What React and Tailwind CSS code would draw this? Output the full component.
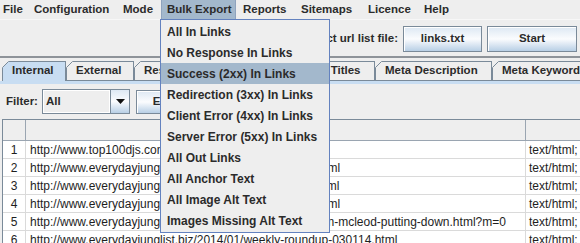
import React from 'react';

const menus = [
  ['File', 'w-[28px] pl-[3px]'],
  ['Configuration', 'w-[89px] pl-[6px]'],
  ['Mode', 'w-[44px] pl-[6px]'],
  ['Bulk Export', 'w-[75px] pl-[6px]', true],
  ['Reports', 'w-[58px] pl-[7px]'],
  ['Sitemaps', 'w-[67px] pl-[7px]'],
  ['Licence', 'w-[56px] pl-[7px]'],
  ['Help', 'w-[48px] pl-[7px]']
];

const exportItems = [
  'All In Links',
  'No Response In Links',
  'Success (2xx) In Links',
  'Redirection (3xx) In Links',
  'Client Error (4xx) In Links',
  'Server Error (5xx) In Links',
  'All Out Links',
  'All Anchor Text',
  'All Image Alt Text',
  'Images Missing Alt Text'
];

const tabs = [
  ['Internal', 'w-[64px]', true],
  ['External', 'w-[68px]'],
  ['Response Codes', 'w-[116px]'],
  ['URI', 'w-[40px]'],
  ['Page Titles', 'w-[85px]'],
  ['Meta Description', 'w-[117px]'],
  ['Meta Keywords', 'w-[124px]']
];

const rows = [
  'http://www.top100djs.com/dj/dj-hype',
  'http://www.everydayjunglist.biz/2014/01/weekend-mix.html',
  'http://www.everydayjunglist.biz/2014/01/free-releases.html',
  'http://www.everydayjunglist.biz/2014/01/old-skool-mix.html',
  'http://www.everydayjunglist.biz/2014/01/q-and-a-with-tom-mcleod-putting-down.html?m=0',
  'http://www.everydayjunglist.biz/2014/01/weekly-roundup-030114.html'
];

const btn =
  'flex items-center justify-center border border-[#7a8a99] bg-linear-to-b from-[#dde8f3] via-[#fbfcfe] to-[#b8cfe5] shadow-[inset_1px_1px_0_#ffffff] font-bold text-[11.5px] text-[#2b2b2b]';

function TabCorner() {
  return (
    <svg className="absolute -left-px -top-px" width="7" height="7" viewBox="0 0 7 7">
      <polygon points="0,0 7,0 0,7" fill="#eeeeee" />
      <line x1="0.5" y1="6.5" x2="6.5" y2="0.5" stroke="#7a8a99" strokeWidth="1" />
    </svg>
  );
}

export default function App() {
  return (
    <div className="relative h-[243px] w-[580px] overflow-hidden bg-[#eeeeee] font-['Liberation_Sans',Arial,sans-serif] text-[#2b2b2b]">
      {/* menu bar */}
      <div className="flex h-[20px] border-b border-[#f7f7f7] text-[11.5px] font-bold">
        {menus.map(([label, cls, active]) => (
          <div
            key={label}
            className={`${cls} flex h-[19px] shrink-0 items-center whitespace-nowrap ${
              active ? 'bg-[#a3b8cc] shadow-[inset_1px_0_0_#8fa3bd,inset_-1px_0_0_#8fa3bd]' : ''
            }`}
          >
            {label}
          </div>
        ))}
      </div>

      {/* toolbar */}
      <div className="flex h-[36px] items-center justify-end pr-[3px] pt-px">
        <span className="mr-[5px] text-[11.5px] font-bold">Select url list file:</span>
        <div className={`${btn} mr-[5px] h-[26px] w-[79px]`}>links.txt</div>
        <div className={`${btn} h-[26px] w-[90px]`}>Start</div>
      </div>

      <div className="h-[2px] bg-[#8e9399]" />

      {/* tabs */}
      <div className="flex h-[23px] items-end pl-[2px] text-[11.5px] font-bold">
        {tabs.map(([label, cls, selected]) => (
          <div
            key={label}
            className={`${cls} relative flex shrink-0 items-center whitespace-nowrap border-x border-t border-[#7a8a99] pl-[9px] ${
              selected ? 'h-[20px] bg-[#c8ddf2] pb-px' : 'h-[20px] border-b bg-[#eeeeee]'
            }`}
          >
            <TabCorner />
            {label}
          </div>
        ))}
      </div>
      <div className="h-[3px] bg-[#c8ddf2]" />

      {/* filter row */}
      <div className="flex h-[35px] items-center pl-[6px]">
        <span className="w-[36px] text-[11.5px] font-bold">Filter:</span>
        <div className="flex h-[25px] w-[88px] border border-[#7a8a99]">
          <div className="flex flex-1 items-center bg-[#eeeeee] pl-[3px] text-[11.5px] font-bold shadow-[inset_0_0_0_1px_#ffffff]">
            All
          </div>
          <div className="flex w-[19px] items-center justify-center border-l border-[#7a8a99] bg-linear-to-b from-[#dde8f3] via-[#fbfcfe] to-[#b8cfe5]">
            <svg width="9" height="5" viewBox="0 0 9 5">
              <polygon points="0,0 9,0 4.5,5" fill="#111111" />
            </svg>
          </div>
        </div>
        <div className={`${btn} ml-[6px] h-[24px] w-[70px]`}>Export</div>
      </div>

      {/* table */}
      <div className="ml-[2px] border-l border-t border-[#7a8a99] bg-white text-[12px] text-[#1e1e1e]">
        <div className="grid h-[21px] grid-cols-[23px_500px_1fr] border-b border-[#9aa5b1] bg-[#eeeeee]">
          <div className="border-r border-[#9aa5b1]" />
          <div className="border-r border-[#9aa5b1]" />
          <div />
        </div>
        {rows.map((url, i) => (
          <div key={i} className="grid h-[18px] grid-cols-[23px_500px_1fr] border-b border-[#dadada]">
            <div className="flex items-center justify-center border-r border-[#dadada]">{i + 1}</div>
            <div className="flex items-center overflow-hidden whitespace-nowrap border-r border-[#dadada] pl-[4px]">
              {url}
            </div>
            <div className="flex items-center overflow-hidden whitespace-nowrap pl-[3px]">text/html; charset=UTF-8</div>
          </div>
        ))}
      </div>

      {/* open Bulk Export menu */}
      <div className="absolute left-[160px] top-[19px] w-[170px] border border-[#6382bf] bg-[#eeeeee] pb-px pt-px text-[12px] font-bold">
        {exportItems.map((item, i) => (
          <div
            key={item}
            className={`flex h-[21px] items-center whitespace-nowrap pl-[6px] ${i === 2 ? 'bg-[#a3b8cc]' : ''}`}
          >
            {item}
          </div>
        ))}
      </div>
    </div>
  );
}
